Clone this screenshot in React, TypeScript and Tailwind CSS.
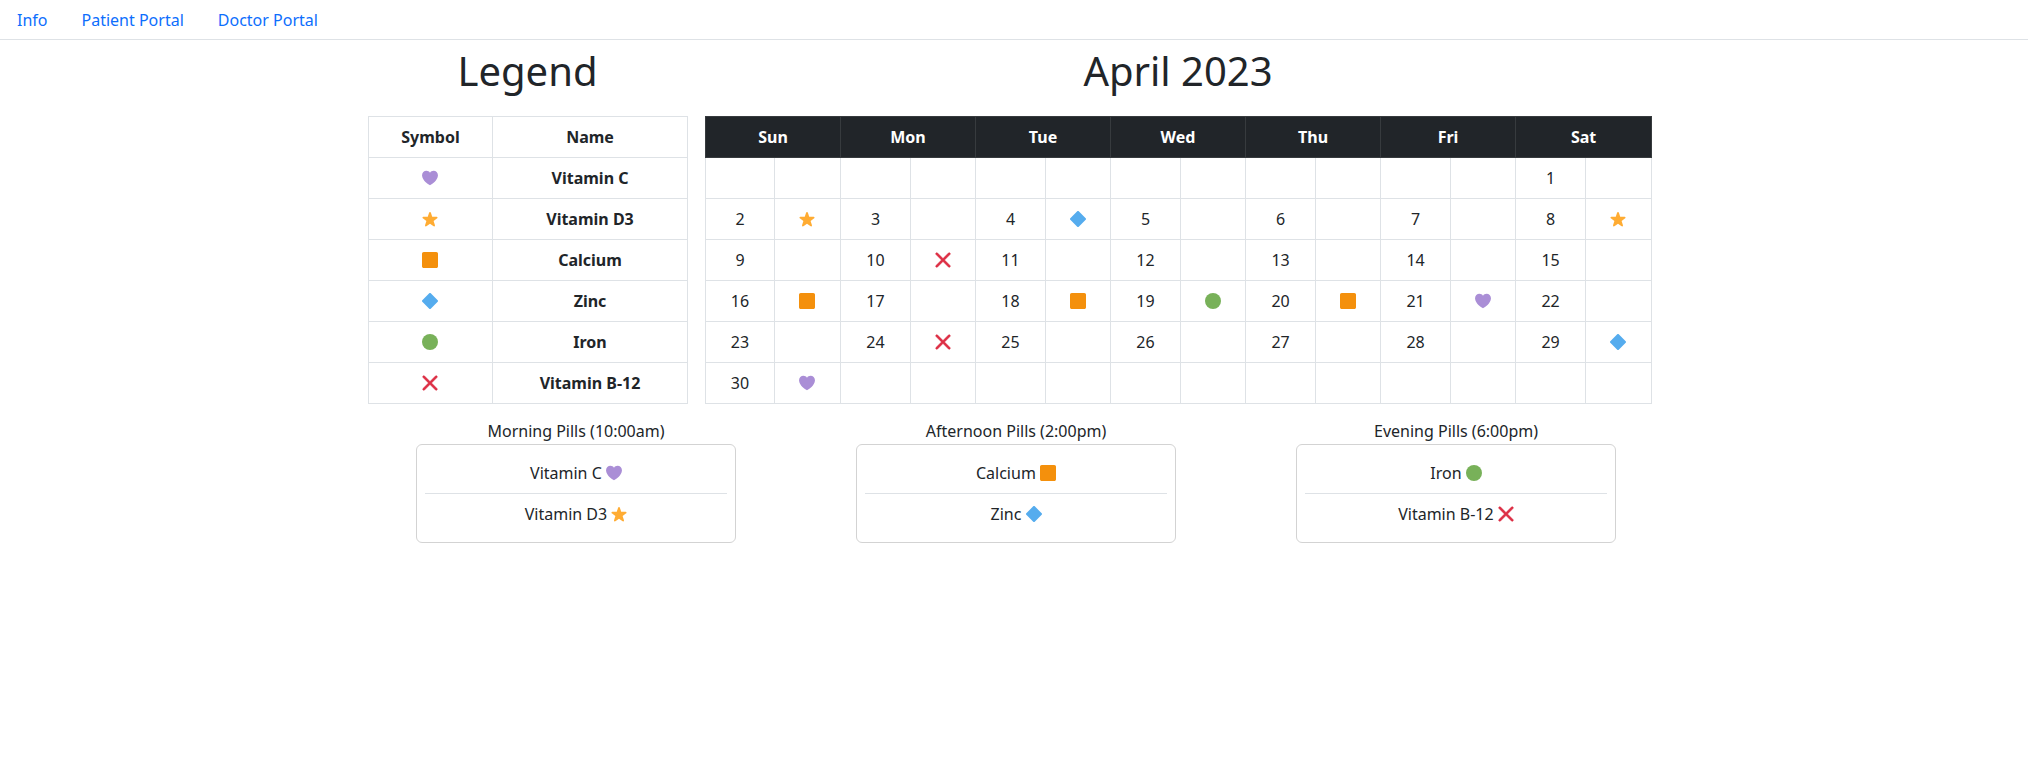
import type { ReactNode } from 'react'

type Pill = 'heart' | 'star' | 'square' | 'diamond' | 'circle' | 'cross'

const shapes: Record<Pill, ReactNode> = {
  heart: (
    <path
      fill="#AA8ED6"
      d="M35.885 11.833c0-5.45-4.418-9.868-9.867-9.868-3.308 0-6.227 1.633-8.018 4.129-1.791-2.496-4.71-4.129-8.017-4.129-5.45 0-9.868 4.417-9.868 9.868 0 .772.098 1.52.266 2.241C1.751 22.587 11.216 31.568 18 34.034c6.783-2.466 16.249-11.447 17.617-19.959.17-.721.268-1.469.268-2.242z"
    />
  ),
  star: (
    <path
      fill="#FFAC33"
      d="M27.287 34.627c-.404 0-.806-.124-1.152-.371L18 28.422l-8.135 5.834c-.693.496-1.623.496-2.312-.008-.689-.499-.979-1.385-.721-2.194l3.034-9.792-8.062-5.681c-.685-.505-.97-1.393-.708-2.203.264-.808 1.016-1.357 1.866-1.363L12.947 13l3.179-9.549c.268-.809 1.023-1.353 1.874-1.353.851 0 1.606.545 1.875 1.353L23 13l10.036.015c.853.006 1.606.556 1.867 1.363.263.81-.022 1.698-.708 2.203l-8.062 5.681 3.034 9.792c.26.809-.033 1.695-.72 2.194-.347.254-.747.379-1.16.379z"
    />
  ),
  square: (
    <path
      fill="#F4900C"
      d="M36 32c0 2.209-1.791 4-4 4H4c-2.209 0-4-1.791-4-4V4c0-2.209 1.791-4 4-4h28c2.209 0 4 1.791 4 4v28z"
    />
  ),
  diamond: (
    <path
      fill="#55ACEE"
      d="M.708 19.707c-.944-.943-.944-2.475 0-3.418L16.29.707c.943-.943 2.475-.943 3.418 0l15.584 15.582c.943.943.943 2.475 0 3.418L19.708 35.29c-.943.943-2.475.943-3.418 0L.708 19.707z"
    />
  ),
  circle: <circle fill="#78B159" cx="18" cy="18" r="18" />,
  cross: (
    <path
      fill="#DD2E44"
      stroke="#DD2E44"
      strokeWidth="1"
      d="M21.533 18.002L33.768 5.768c.976-.976.976-2.559 0-3.535-.977-.977-2.559-.977-3.535 0L17.998 14.467 5.764 2.233c-.976-.977-2.56-.977-3.535 0-.977.976-.977 2.559 0 3.535l12.234 12.234L2.201 30.265c-.977.977-.977 2.559 0 3.535.488.488 1.128.732 1.768.732s1.28-.244 1.768-.732l12.262-12.263 12.234 12.234c.488.488 1.128.732 1.768.732.64 0 1.279-.244 1.768-.732.976-.977.976-2.559 0-3.535L21.533 18.002z"
    />
  ),
}

function PillIcon({ pill, className = '' }: { pill: Pill; className?: string }) {
  return (
    <svg viewBox="0 0 36 36" className={`inline-block h-4 w-4 align-[-2px] ${className}`}>
      {shapes[pill]}
    </svg>
  )
}

const legend: { pill: Pill; name: string }[] = [
  { pill: 'heart', name: 'Vitamin C' },
  { pill: 'star', name: 'Vitamin D3' },
  { pill: 'square', name: 'Calcium' },
  { pill: 'diamond', name: 'Zinc' },
  { pill: 'circle', name: 'Iron' },
  { pill: 'cross', name: 'Vitamin B-12' },
]

const days = [
  { name: 'Sun', date: 'w-[69px]', pill: 'w-[66px]' },
  { name: 'Mon', date: 'w-[70px]', pill: 'w-[65px]' },
  { name: 'Tue', date: 'w-[70px]', pill: 'w-[65px]' },
  { name: 'Wed', date: 'w-[70px]', pill: 'w-[65px]' },
  { name: 'Thu', date: 'w-[70px]', pill: 'w-[65px]' },
  { name: 'Fri', date: 'w-[70px]', pill: 'w-[65px]' },
  { name: 'Sat', date: 'w-[70px]', pill: 'w-[66px]' },
]

type Cell = [number | null, Pill | null]

const weeks: Cell[][] = [
  [[null, null], [null, null], [null, null], [null, null], [null, null], [null, null], [1, null]],
  [[2, 'star'], [3, null], [4, 'diamond'], [5, null], [6, null], [7, null], [8, 'star']],
  [[9, null], [10, 'cross'], [11, null], [12, null], [13, null], [14, null], [15, null]],
  [[16, 'square'], [17, null], [18, 'square'], [19, 'circle'], [20, 'square'], [21, 'heart'], [22, null]],
  [[23, null], [24, 'cross'], [25, null], [26, null], [27, null], [28, null], [29, 'diamond']],
  [[30, 'heart'], [null, null], [null, null], [null, null], [null, null], [null, null], [null, null]],
]

const schedule: { title: string; items: { pill: Pill; name: string }[] }[] = [
  {
    title: 'Morning Pills (10:00am)',
    items: [
      { pill: 'heart', name: 'Vitamin C' },
      { pill: 'star', name: 'Vitamin D3' },
    ],
  },
  {
    title: 'Afternoon Pills (2:00pm)',
    items: [
      { pill: 'square', name: 'Calcium' },
      { pill: 'diamond', name: 'Zinc' },
    ],
  },
  {
    title: 'Evening Pills (6:00pm)',
    items: [
      { pill: 'circle', name: 'Iron' },
      { pill: 'cross', name: 'Vitamin B-12' },
    ],
  },
]

const cell = 'h-[41px] border border-[#dee2e6] p-2 text-center align-middle'

export default function App() {
  return (
    <div className="min-h-[774px] bg-white font-['Noto_Sans',sans-serif] text-base leading-6 text-[#212529]">
      <nav className="flex h-10 items-start gap-[34px] border-b border-[#dee2e6] pl-[17px] pt-2">
        <a href="#" className="text-[#0d6efd]">Info</a>
        <a href="#" className="text-[#0d6efd]">Patient Portal</a>
        <a href="#" className="text-[#0d6efd]">Doctor Portal</a>
      </nav>

      <div className="mx-auto w-[1320px] pl-[14px]">
        <div className="flex gap-[18px]">
          <div className="w-[319px]">
            <h1 className="mt-[7px] mb-[21px] text-center text-[40px] leading-[48px] font-normal">Legend</h1>
            <table className="w-[319px] table-fixed border-collapse">
              <colgroup>
                <col className="w-[124px]" />
                <col className="w-[195px]" />
              </colgroup>
              <thead>
                <tr>
                  <th className={cell}>Symbol</th>
                  <th className={cell}>Name</th>
                </tr>
              </thead>
              <tbody>
                {legend.map((row) => (
                  <tr key={row.name}>
                    <td className={cell}><PillIcon pill={row.pill} className="-ml-px" /></td>
                    <td className={`${cell} font-bold`}>{row.name}</td>
                  </tr>
                ))}
              </tbody>
            </table>
          </div>

          <div className="w-[946px]">
            <h1 className="mt-[7px] mb-[21px] text-center text-[40px] leading-[48px] font-normal">April 2023</h1>
            <table className="w-[946px] table-fixed border-collapse">
              <colgroup>
                {days.map((d) => [
                  <col key={d.name + 'n'} className={d.date} />,
                  <col key={d.name + 'p'} className={d.pill} />,
                ])}
              </colgroup>
              <thead>
                <tr>
                  {days.map((d) => (
                    <th
                      key={d.name}
                      colSpan={2}
                      className="h-[41px] border border-[#373b3e] bg-[#212529] p-2 text-center align-middle font-bold text-white"
                    >
                      {d.name}
                    </th>
                  ))}
                </tr>
              </thead>
              <tbody>
                {weeks.map((week, w) => (
                  <tr key={w}>
                    {week.map(([date, pill], d) => [
                      <td key={d + 'n'} className={cell}>{date}</td>,
                      <td key={d + 'p'} className={cell}>{pill && <PillIcon pill={pill} className="-ml-px" />}</td>,
                    ])}
                  </tr>
                ))}
              </tbody>
            </table>
          </div>
        </div>

        <div className="mt-[15px] flex gap-[120px] pl-[48px]">
          {schedule.map((group) => (
            <div key={group.title} className="w-[320px] text-center">
              <p>{group.title}</p>
              <ul className="mt-px rounded-md border border-[#d3d3d3] p-2">
                {group.items.map((item, i) => (
                  <li key={item.name} className={`py-2 ${i > 0 ? 'border-t border-[#dee2e6]' : ''}`}>
                    {item.name} <PillIcon pill={item.pill} />
                  </li>
                ))}
              </ul>
            </div>
          ))}
        </div>
      </div>
    </div>
  )
}
